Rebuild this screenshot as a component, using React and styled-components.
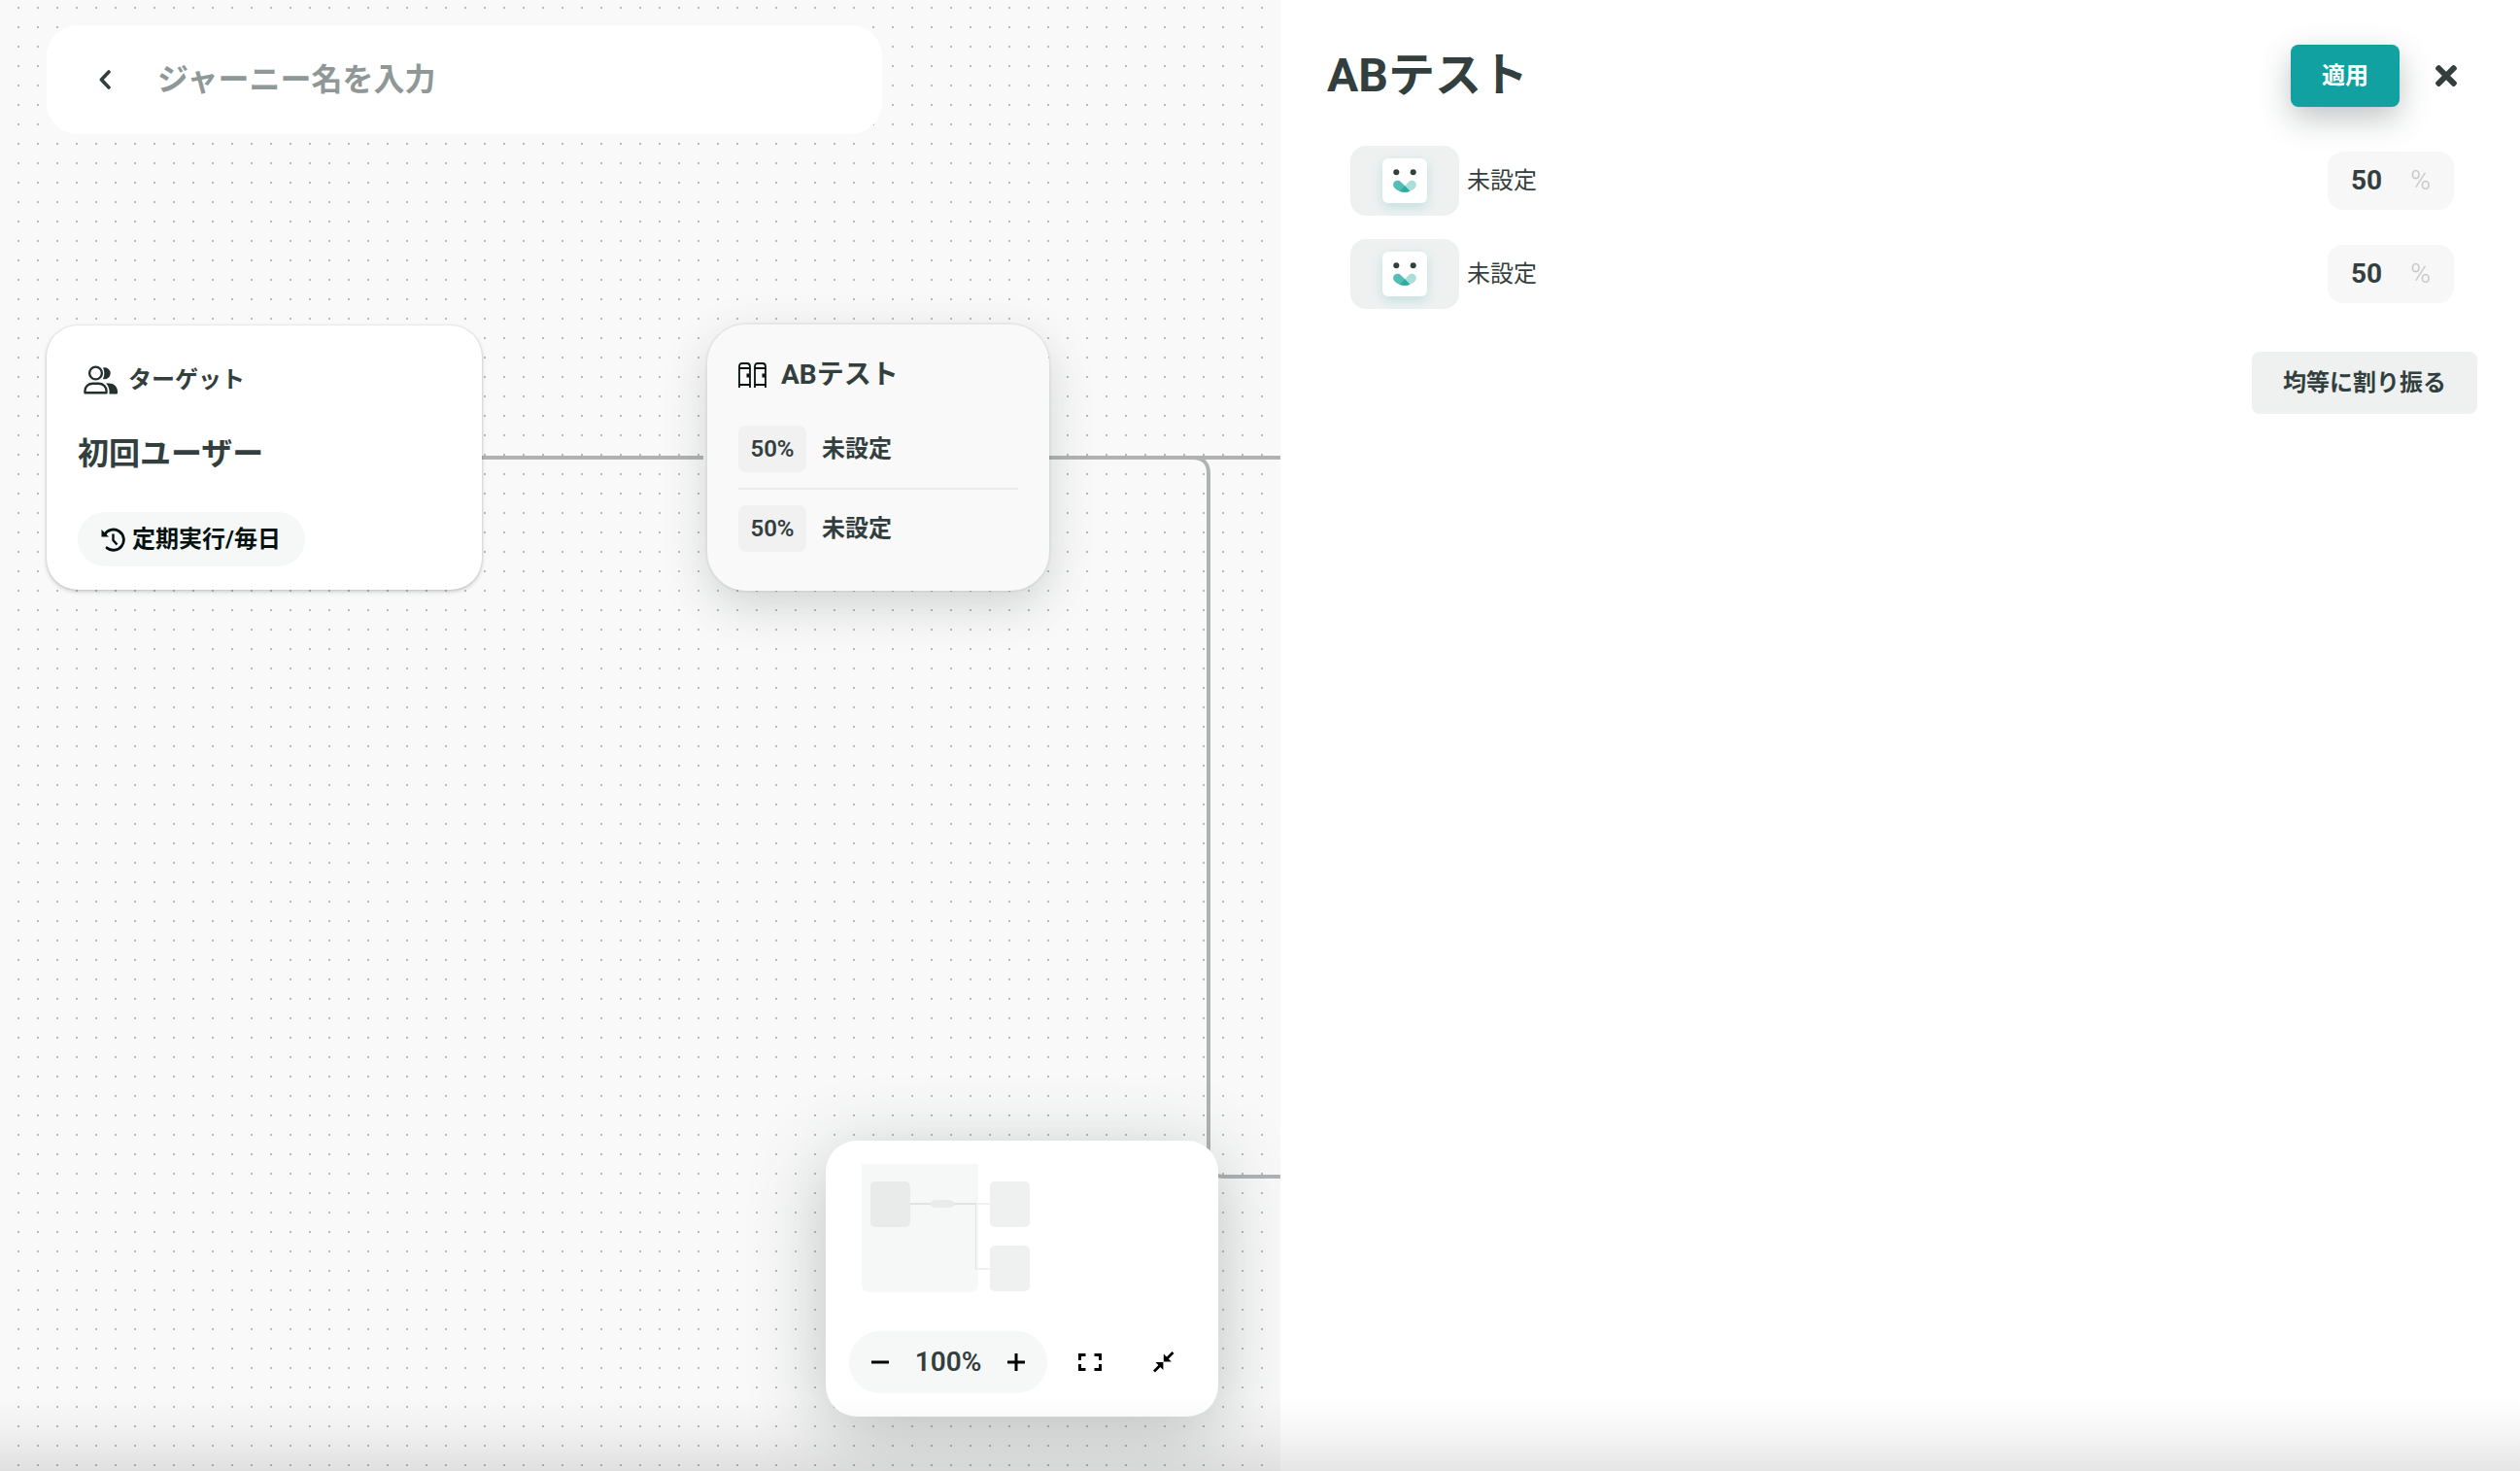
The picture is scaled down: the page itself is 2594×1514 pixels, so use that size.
import React from 'react';
import styled, { createGlobalStyle } from 'styled-components';
import { FaTimes } from 'react-icons/fa';

const GlobalStyle = createGlobalStyle`
  * {
    box-sizing: border-box;
  }
  body {
    margin: 0;
    color: #333f3e;
    font-family: Roboto, 'Noto Sans CJK JP', sans-serif;
    font-size: 24px;
    line-height: 36px;
  }
  button, input {
    margin: 0;
    padding: 0;
    border: 0;
    background: none;
    color: inherit;
    font: inherit;
  }
  button {
    cursor: pointer;
  }
  svg {
    display: block;
    flex: none;
  }
`
const Page = styled.div`
  position: relative;
  display: flex;
  min-height: 100vh;
`
const BottomFade = styled.div`
  position: absolute;
  left: 0;
  right: 0;
  bottom: 0;
  height: 76px;
  background: linear-gradient(rgba(0, 0, 0, 0), rgba(0, 0, 0, 0.04) 50%, rgba(0, 0, 0, 0.1));
  pointer-events: none;
`

/* canvas */
const Canvas = styled.main`
  position: relative;
  flex: 1;
  min-width: 0;
  padding: 26px 48px;
  overflow: hidden;
  background-color: #f9f9f9;
  background-image: conic-gradient(from 90deg at 18px 18px, #b8baba 90deg, transparent 0);
  background-size: 20px 20px;
  background-position: 0 9px;
`
const NameBar = styled.header`
  display: flex;
  align-items: center;
  gap: 34px;
  max-width: 860px;
  height: 112px;
  padding: 0 40px;
  border-radius: 32px;
  background: #fff;
`
const IconButton = styled.button`
  display: flex;
  align-items: center;
  justify-content: center;
  width: ${props => props.$size}px;
  height: ${props => props.$size}px;
`
const NameInput = styled.input`
  flex: 1;
  min-width: 0;
  height: 64px;
  font-size: 32px;
  font-weight: 700;
  outline: none;
  &::placeholder {
    color: #909897;
    opacity: 1;
  }
`
const Edges = styled.svg`
  position: absolute;
  top: 0;
  left: 0;
`
const NodeCard = styled.section`
  position: absolute;
  display: flex;
  flex-direction: column;
  left: ${props => props.$x}px;
  top: ${props => props.$y}px;
  width: ${props => props.$width}px;
`
const TargetCard = styled(NodeCard)`
  padding: 36px 32px 24px;
  border-radius: 32px;
  background: #fff;
  box-shadow: 0 0 2px rgba(51, 63, 62, 0.2), 0 2px 4px rgba(51, 63, 62, 0.25);
`
const TargetLabel = styled.div`
  display: flex;
  align-items: center;
  gap: 10px;
  height: 40px;
  padding-left: 6px;
  font-weight: 700;
`
const TargetName = styled.h2`
  margin: 32px 0 36px;
  font-size: 32px;
  line-height: 48px;
`
const Schedule = styled.div`
  display: flex;
  align-items: center;
  align-self: flex-start;
  gap: 7px;
  height: 56px;
  padding: 0 25px 0 24px;
  border-radius: 28px;
  background: #f6f8f8;
  color: #04120f;
  font-weight: 700;
`
const TestCard = styled(NodeCard)`
  padding: 30px 32px 40px;
  border-radius: 40px;
  background: #f9f9f9;
  box-shadow: 0 0 0 2px rgba(0, 0, 0, 0.04), 0 16px 48px rgba(51, 63, 62, 0.2);
`
const TestTitle = styled.h2`
  display: flex;
  align-items: center;
  gap: 15px;
  margin: 0 0 30px;
  font-size: 28px;
  line-height: 44px;
`
const Branch = styled.div`
  display: flex;
  align-items: center;
  gap: 16px;
  font-weight: 700;
  & + & {
    margin-top: 16px;
    padding-top: 16px;
    border-top: 2px solid #ebebeb;
  }
`
const Ratio = styled.span`
  width: 70px;
  height: 48px;
  border-radius: 8px;
  background: #f1f1f1;
  line-height: 48px;
  text-align: center;
  font-weight: 600;
`
const MiniMap = styled.section`
  position: absolute;
  right: 64px;
  bottom: 56px;
  width: 404px;
  padding: 24px;
  border-radius: 32px;
  background: #fff;
  box-shadow: 0 16px 80px rgba(51, 63, 62, 0.3);
`
const Controls = styled.div`
  display: flex;
  align-items: center;
  gap: 20px;
  margin-top: 40px;
`
const ZoomPill = styled.div`
  display: flex;
  align-items: center;
  justify-content: space-between;
  width: 204px;
  height: 64px;
  padding: 0 8px;
  border-radius: 32px;
  background: #f6f8f8;
  font-size: 28px;
  font-weight: 600;
`

/* settings panel */
const Panel = styled.aside`
  flex: none;
  width: 1276px;
  max-width: 60%;
  padding: 40px 44px 40px 48px;
  background: #fff;
`
const PanelHeader = styled.header`
  display: flex;
  align-items: center;
  height: 76px;
`
const PanelTitle = styled.h1`
  flex: 1;
  margin: 0;
  font-size: 48px;
  line-height: 72px;
`
const Button = styled.button`
  height: 64px;
  padding: 0 32px;
  border-radius: 8px;
  background: ${props => (props.$primary ? '#11a1a1' : '#eff1f1')};
  color: ${props => (props.$primary ? '#fff' : '#333f3e')};
  box-shadow: ${props => (props.$primary ? '0 0 2px rgba(51, 63, 62, 0.08), 0 12px 32px rgba(51, 63, 62, 0.3)' : 'none')};
  font-weight: 700;
`
const CloseButton = styled(IconButton)`
  margin-left: 16px;
`
const Rows = styled.ul`
  display: flex;
  flex-direction: column;
  gap: 24px;
  margin: 34px 24px 44px;
  padding: 0;
  list-style: none;
`
const Row = styled.li`
  display: flex;
  align-items: center;
  height: 72px;
`
const Thumb = styled.span`
  display: flex;
  align-items: center;
  justify-content: center;
  width: 112px;
  height: 72px;
  margin-right: 8px;
  border-radius: 16px;
  background: #eff1f1;
`
const Face = styled.span`
  width: 46px;
  height: 46px;
  border-radius: 6px;
  background: #fff;
  box-shadow: 0 4px 12px rgba(42, 173, 160, 0.24);
`
const RowLabel = styled.label`
  flex: 1;
`
const Percent = styled.div`
  display: flex;
  align-items: center;
  width: 130px;
  height: 60px;
  padding: 0 24px;
  border-radius: 16px;
  background: #f7f7f7;
  font-size: 28px;
`
const PercentInput = styled.input`
  flex: 1;
  min-width: 0;
  font-weight: 700;
  outline: none;
`
const Unit = styled.span`
  color: #c4c6c6;
  font-weight: 300;
`
const Actions = styled.div`
  display: flex;
  justify-content: flex-end;
`

const branches = [
  { id: 'branch-a', name: '未設定', ratio: 50 },
  { id: 'branch-b', name: '未設定', ratio: 50 },
];

const BackIcon = () => (
  <svg width="12" height="20" viewBox="0 0 12 20" fill="none" stroke="#333f3e" strokeWidth="3.6" strokeLinecap="round" strokeLinejoin="round">
    <path d="M10 2 2.4 10l7.600 8" />
  </svg>
);

const UsersIcon = () => (
  <svg width="36" height="30" viewBox="0 0 36 30" fill="#22302e">
    <circle cx="12.5" cy="8" r="6.4" fill="none" stroke="#22302e" strokeWidth="2.4" />
    <path d="M1.5 28.3v-2c0-4.5 3.5-7.6 8-7.6h6c4.5 0 8 3.1 8 7.6v2z" fill="none" stroke="#22302e" strokeWidth="2.4" strokeLinejoin="round" />
    <path d="M20 2.500a6 6 0 1 1 0 11.500c1.800-3.400 1.800-8 0-11.500z" />
    <path d="M23 18.500h3c5 0 9 3.500 9 8.300V28c0 1-.5 1.500-1.500 1.500h-7c.5-4.500-.5-8-3.500-11z" />
  </svg>
);

const HistoryIcon = () => (
  <svg width="25" height="25" viewBox="0 0 25 25" fill="none" stroke="#04120f" strokeWidth="2.8">
    <path d="M3.500 7.500A10.600 10.600 0 1 1 6 20.800" strokeLinecap="round" />
    <path d="M.5 2v7.500H8z" fill="#04120f" stroke="none" />
    <path d="M12.500 6.500v6.500l4 4.500" strokeWidth="2.4" />
  </svg>
);

const DoorsIcon = () => (
  <svg width="29" height="26" viewBox="0 0 29 26" fill="none" stroke="#04120f" strokeWidth="1.8">
    <path d="M1 26V4.500C1 2 2 1 4 1h5c2 0 3 1 3 3.500V26M1 6h11M1 23h11" />
    <path d="M17 26V4.500C17 2 18 1 20 1h5c2 0 3 1 3 3.500V26M17 6h11M17 23h11" />
    <path d="M10 11.500v4M26 11.500v4" strokeWidth="3" />
  </svg>
);

const FaceIcon = () => (
  <svg width="46" height="46" viewBox="0 0 46 46">
    <circle cx="14.3" cy="14.3" r="3" fill="#333f3e" />
    <circle cx="31.7" cy="14.3" r="3" fill="#333f3e" />
    <path d="M19 24.300 28.300 33.700C24.500 35.300 18.500 35 14 31.800 11 29.500 10.300 27 12 24.600 13.700 22.300 17 22.300 19 24.300z" fill="#55bdb1" />
    <path d="M27 24.300 17.700 33.700C21.500 35.300 27.500 35 32 31.800 35 29.500 35.700 27 34 24.600 32.300 22.300 29 22.300 27 24.300z" fill="#aaded8" />
    <path d="M19 24.300 28.300 33.700C24.500 35.300 18.500 35 14 31.800L20.500 26z" fill="#55bdb1" />
    <path d="M23 28.300 28.300 33.700C25.300 35 20.700 35 17.700 33.700z" fill="#2aada0" />
  </svg>
);

const MinusIcon = () => (
  <svg width="18" height="18" viewBox="0 0 18 18" stroke="#000" strokeWidth="3">
    <path d="M0 9h18" />
  </svg>
);

const PlusIcon = () => (
  <svg width="18" height="18" viewBox="0 0 18 18" stroke="#000" strokeWidth="3">
    <path d="M0 9h18M9 0v18" />
  </svg>
);

const FullscreenIcon = () => (
  <svg width="24" height="18" viewBox="0 0 24 18" fill="none" stroke="#000" strokeWidth="3">
    <path d="M1.500 7V1.500h6M16.500 1.500h6V7M22.500 11v5.500h-6M7.500 16.500h-6V11" />
  </svg>
);

const CollapseIcon = () => (
  <svg width="22" height="22" viewBox="0 0 22 22" stroke="#000" strokeWidth="2.8">
    <path d="M20.500 1 13 8.500M1 20.500 8.500 13" />
    <path d="M10.800 2.600v8h8zM10.400 19v-8h-8z" stroke="none" />
  </svg>
);

const MapPreview = () => (
  <svg width="356" height="132" viewBox="0 0 356 132">
    <path d="M13 0h120v124a8 8 0 0 1-8 8H21a8 8 0 0 1-8-8z" fill="#f6f8f8" />
    <path d="M62 41h69" stroke="#e0e3e3" strokeWidth="2" />
    <path d="M131 41h14M131 108h14" stroke="#eff1f1" strokeWidth="2" />
    <path d="M130.500 40v69" stroke="#e0e3e3" />
    <rect x="22" y="18" width="41" height="47" rx="5" fill="#e9ebeb" />
    <rect x="83" y="37" width="26" height="8" rx="7" fill="#e9ebeb" />
    <rect x="145" y="18" width="41" height="47" rx="5" fill="#eff1f1" />
    <rect x="145" y="84" width="41" height="47" rx="5" fill="#eff1f1" />
  </svg>
);

class App extends React.Component {

    state = { name: '', ratios: branches.map((branch) => branch.ratio) };

    changeName = (e) => {
        this.setState({ name: e.target.value });
    }

    changeRatio = (index, value) => {
        this.setState(({ ratios }) => ({
            ratios: ratios.map((ratio, i) => (i === index ? value : ratio))
        }));
    }

    //gives every branch the same share
    splitEvenly = () => {
        const share = Math.floor(100 / branches.length);
        this.setState({ ratios: branches.map(() => share) });
    }

    render () {
        const { name, ratios } = this.state;
        return(
            <Page>
                <GlobalStyle />
                <Canvas>
                    <NameBar>
                      <IconButton $size={40} aria-label="戻る"><BackIcon /></IconButton>
                      <NameInput aria-label="ジャーニー名" placeholder="ジャーニー名を入力" value={name} onChange={this.changeName} />
                    </NameBar>

                    <Edges width="1600" height="1514" fill="none" stroke="#afb3b3" strokeWidth="4">
                      <path d="M496 471h228" />
                      <path d="M1080 471h520" />
                      <path d="M1228 471c10 0 16 6 16 16v708c0 10 6 16 16 16h340" />
                    </Edges>

                    <TargetCard $x={48} $y={335} $width={448}>
                      <TargetLabel><UsersIcon />ターゲット</TargetLabel>
                      <TargetName>初回ユーザー</TargetName>
                      <Schedule><HistoryIcon />定期実行/毎日</Schedule>
                    </TargetCard>

                    <TestCard $x={728} $y={334} $width={352}>
                      <TestTitle><DoorsIcon />ABテスト</TestTitle>
                      {branches.map((branch, i) => (
                        <Branch key={branch.id}>
                          <Ratio>{ratios[i]}%</Ratio>
                          {branch.name}
                        </Branch>
                      ))}
                    </TestCard>

                    <MiniMap>
                      <MapPreview />
                      <Controls>
                        <ZoomPill>
                          <IconButton $size={48} aria-label="縮小"><MinusIcon /></IconButton>
                          <span>100%</span>
                          <IconButton $size={48} aria-label="拡大"><PlusIcon /></IconButton>
                        </ZoomPill>
                        <IconButton $size={48} aria-label="全体表示"><FullscreenIcon /></IconButton>
                        <IconButton $size={64} aria-label="閉じる"><CollapseIcon /></IconButton>
                      </Controls>
                    </MiniMap>
                </Canvas>

                <Panel>
                    <PanelHeader>
                      <PanelTitle>ABテスト</PanelTitle>
                      <Button $primary>適用</Button>
                      <CloseButton $size={64} aria-label="閉じる"><FaTimes size={32} /></CloseButton>
                    </PanelHeader>
                    <Rows>
                      {branches.map((branch, i) => (
                        <Row key={branch.id}>
                          <Thumb><Face><FaceIcon /></Face></Thumb>
                          <RowLabel htmlFor={branch.id}>{branch.name}</RowLabel>
                          <Percent>
                            <PercentInput id={branch.id} inputMode="numeric" value={ratios[i]} onChange={(e) => this.changeRatio(i, e.target.value)} />
                            <Unit>%</Unit>
                          </Percent>
                        </Row>
                      ))}
                    </Rows>
                    <Actions>
                      <Button onClick={this.splitEvenly}>均等に割り振る</Button>
                    </Actions>
                </Panel>
                <BottomFade />
            </Page>
        )
    }
};

export default App;
